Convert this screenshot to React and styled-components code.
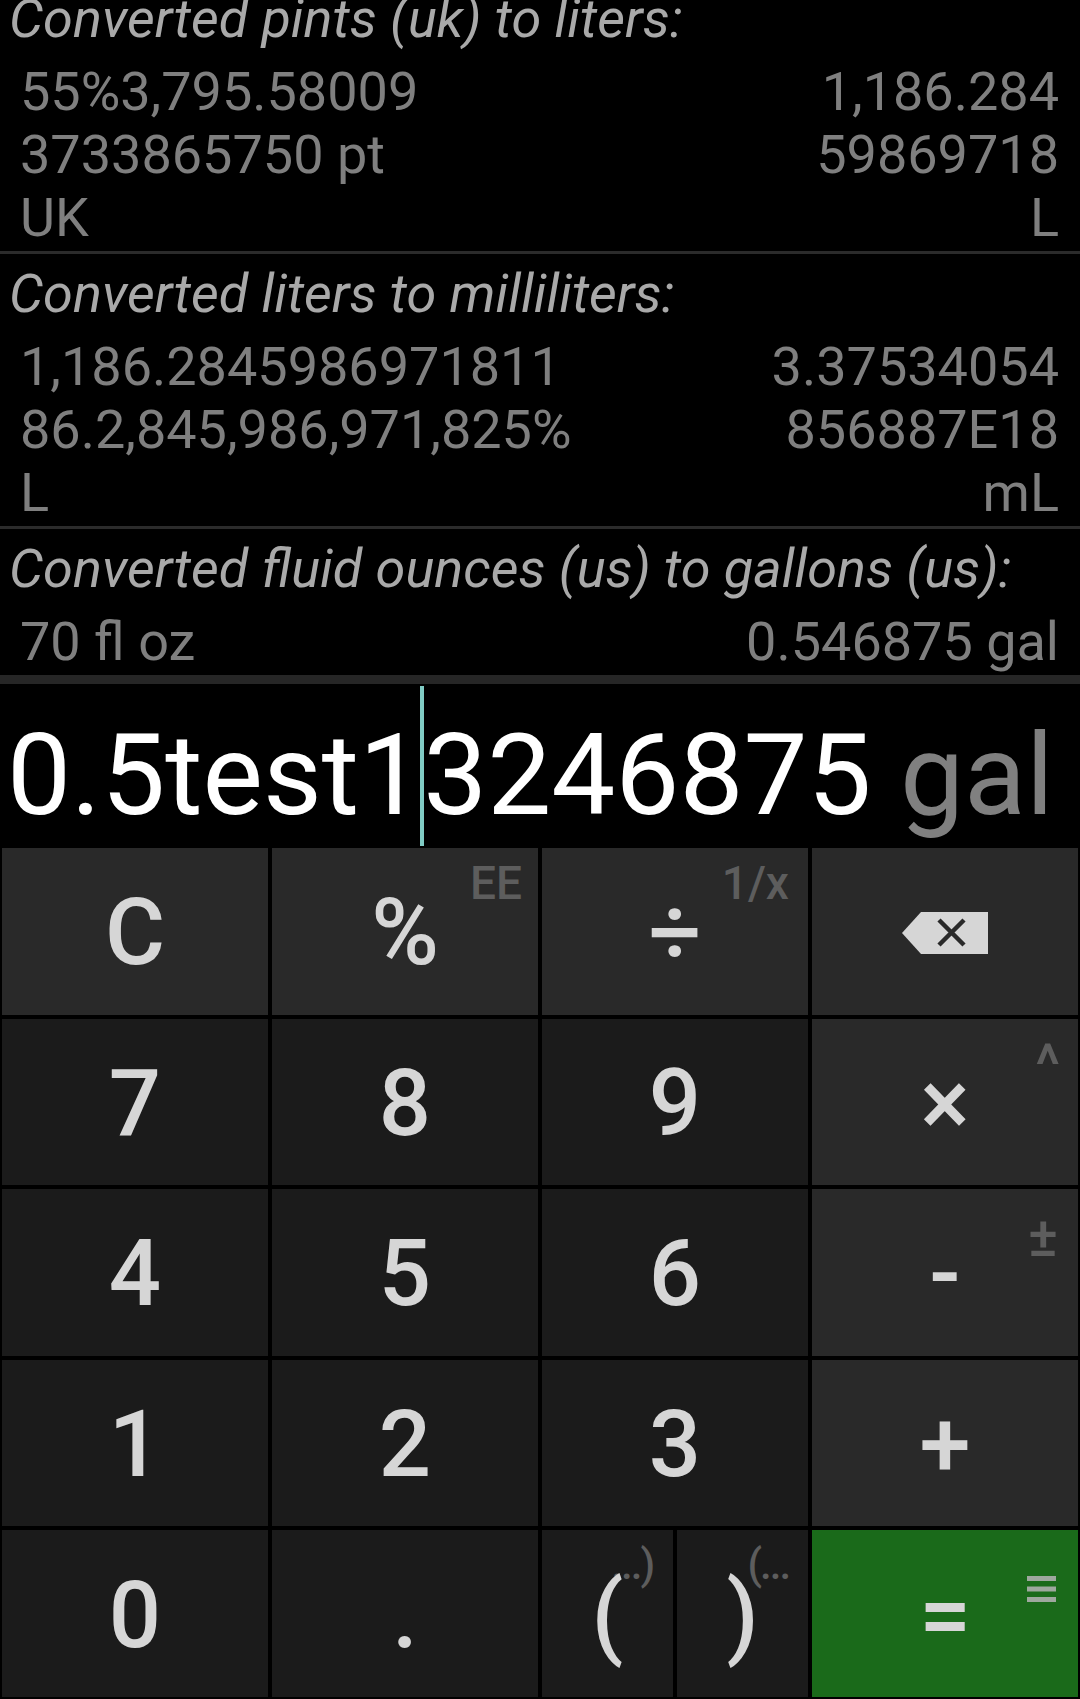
import styled, { createGlobalStyle } from "styled-components";

const GlobalStyle = createGlobalStyle`
  html, body {
    margin: 0;
    padding: 0;
    background: #000;
  }
  body {
    font-family: Roboto, "Noto Sans", sans-serif;
  }
`;

const history = [
  {
    title: "Converted pints (uk) to liters:",
    from: ["55%3,795.58009", "3733865750 pt", "UK"],
    to: ["1,186.284", "59869718", "L"],
  },
  {
    title: "Converted liters to milliliters:",
    from: ["1,186.2845986971811", "86.2,845,986,971,825%", "L"],
    to: ["3.37534054", "856887E18", "mL"],
  },
  {
    title: "Converted fluid ounces (us) to gallons (us):",
    from: ["70 fl oz"],
    to: ["0.546875 gal"],
  },
];

const keyColors = {
  op: "#292929",
  num: "#1b1b1b",
  eq: "#1a6a1a",
};

const Screen = styled.div`
  width: 1080px;
  height: 1699px;
  overflow: hidden;
  display: flex;
  flex-direction: column;
  background: #000;
`;

const History = styled.div`
  display: flex;
  flex-direction: column;
  margin-top: -21px;
`;

const Entry = styled.section`
  padding: 9px 0 2px;
  border-bottom: ${(p) => (p.$last ? "9px solid #262626" : "3px solid #2b2b2b")};
`;

const Title = styled.div`
  font: italic 400 54px/62px Roboto, sans-serif;
  color: #a9a9a9;
  padding-left: 9px;
  white-space: nowrap;
`;

const Values = styled.div`
  display: flex;
  justify-content: space-between;
  padding: 10px 21px 0 20px;
  font: 400 54px/63px Roboto, sans-serif;
  color: #7f7f7f;
`;

const Column = styled.div`
  display: flex;
  flex-direction: column;
  align-items: ${(p) => (p.$right ? "flex-end" : "flex-start")};
  white-space: nowrap;
`;

const Display = styled.div`
  height: 163px;
  box-sizing: border-box;
  padding: 2px 0 0 7px;
  font: 400 114px/133px Roboto, sans-serif;
  color: #fff;
  white-space: nowrap;
  overflow: hidden;
`;

const Unit = styled.span`
  color: #808080;
`;

const Cursor = styled.span`
  display: inline-block;
  width: 4px;
  height: 160px;
  margin: 0 -1px 0 -3px;
  background: #80cbc4;
  vertical-align: -32px;
`;

const Keypad = styled.div`
  flex: 1;
  min-height: 0;
  display: grid;
  grid-template-columns: repeat(4, 1fr);
  grid-template-rows: repeat(5, 1fr);
  gap: 4px;
  padding: 1px 2px 2px;
`;

const Key = styled.button`
  position: relative;
  border: 0;
  margin: 0;
  padding: 4px 0 0;
  background: ${(p) => keyColors[p.$kind]};
  color: #d6d6d6;
  font: 500 92px/1 Roboto, sans-serif;
  display: flex;
  align-items: center;
  justify-content: center;
  cursor: pointer;
`;

const Sup = styled.span`
  position: absolute;
  top: ${(p) => p.$top}px;
  right: ${(p) => p.$right}px;
  font: 500 ${(p) => p.$size || 46}px/1 Roboto, sans-serif;
  color: #5d5d5d;
`;

const ParenPair = styled.div`
  display: grid;
  grid-template-columns: 1fr 1fr;
  gap: 4px;
`;

const ParenLabel = styled.span`
  position: relative;
  line-height: 1.17;
`;

const ParenChar = styled.span`
  position: relative;
  z-index: 1;
`;

const ParenSup = styled.span`
  position: absolute;
  left: calc(100% - ${(p) => p.$shift}px);
  top: -18px;
  font: 500 42px/1 Roboto, sans-serif;
  letter-spacing: -2px;
  color: #5d5d5d;
  white-space: nowrap;
`;

const BackspaceIcon = () => (
  <svg width="86" height="42" viewBox="0 0 86 42">
    <path d="M0 21 L19 0 H86 V42 H19 Z" fill="#d6d6d6" />
    <path
      d="M37 8 L62 33 M62 8 L37 33"
      stroke="#292929"
      strokeWidth="4.5"
    />
  </svg>
);

const MenuIcon = () => (
  <svg width="29" height="26" viewBox="0 0 29 26">
    <rect x="0" y="0" width="29" height="5" fill="#9ea89e" />
    <rect x="0" y="10.5" width="29" height="5" fill="#9ea89e" />
    <rect x="0" y="21" width="29" height="5" fill="#9ea89e" />
  </svg>
);

const App = () => {
  return (
    <Screen>
      <GlobalStyle />
      <History>
        {history.map((item, i) => (
          <Entry key={item.title} $last={i === history.length - 1}>
            <Title>{item.title}</Title>
            <Values>
              <Column>
                {item.from.map((line) => (
                  <span key={line}>{line}</span>
                ))}
              </Column>
              <Column $right>
                {item.to.map((line) => (
                  <span key={line}>{line}</span>
                ))}
              </Column>
            </Values>
          </Entry>
        ))}
      </History>

      <Display>
        0.5test1
        <Cursor />
        3246875 <Unit>gal</Unit>
      </Display>

      <Keypad>
        <Key $kind="op">C</Key>
        <Key $kind="op">
          %<Sup $top={12} $right={16}>EE</Sup>
        </Key>
        <Key $kind="op">
          ÷<Sup $top={12} $right={19}>1/x</Sup>
        </Key>
        <Key $kind="op">
          <BackspaceIcon />
        </Key>

        <Key $kind="num">7</Key>
        <Key $kind="num">8</Key>
        <Key $kind="num">9</Key>
        <Key $kind="op">
          ×<Sup $top={17} $right={18} $size={58}>^</Sup>
        </Key>

        <Key $kind="num">4</Key>
        <Key $kind="num">5</Key>
        <Key $kind="num">6</Key>
        <Key $kind="op">
          -<Sup $top={20} $right={20} $size={56}>±</Sup>
        </Key>

        <Key $kind="num">1</Key>
        <Key $kind="num">2</Key>
        <Key $kind="num">3</Key>
        <Key $kind="op">+</Key>

        <Key $kind="num">0</Key>
        <Key $kind="num">.</Key>
        <ParenPair>
          <Key $kind="num">
            <ParenLabel>
              <ParenSup $shift={12}>...)</ParenSup>
              <ParenChar>(</ParenChar>
            </ParenLabel>
          </Key>
          <Key $kind="num">
            <ParenLabel>
              <ParenSup $shift={11}>(...</ParenSup>
              <ParenChar>)</ParenChar>
            </ParenLabel>
          </Key>
        </ParenPair>
        <Key $kind="eq">
          =
          <Sup $top={33} $right={22}>
            <MenuIcon />
          </Sup>
        </Key>
      </Keypad>
    </Screen>
  );
};

export default App;
